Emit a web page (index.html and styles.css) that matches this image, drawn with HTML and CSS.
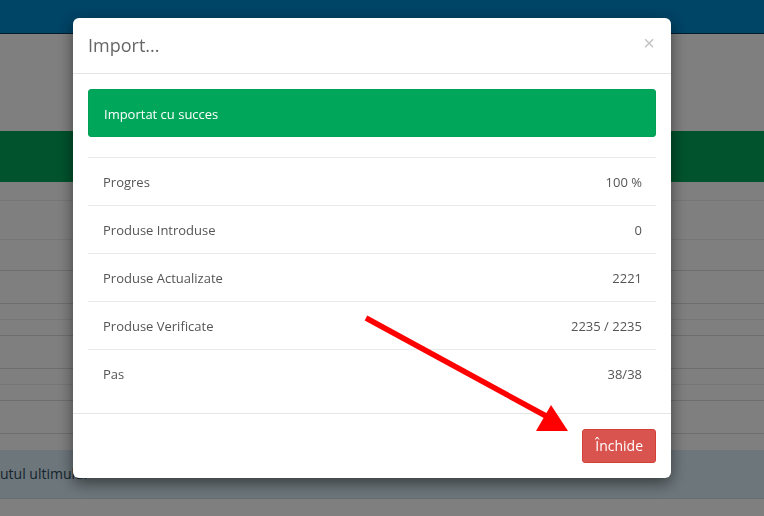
FILE: index.html
```html
<!DOCTYPE html>
<html lang="ro">
<head>
    <meta charset="UTF-8">
    <meta name="viewport" content="width=device-width, initial-scale=1.0">
    <title>Import</title>
    <link rel="stylesheet" href="styles.css">
</head>
<body>
    <div class="page">
        <div class="topbar"></div>
        <div class="hero"></div>
        <div class="band"></div>
        <div class="rows">
            <div class="line h18 light"></div>
            <div class="line h38 light"></div>
            <div class="line h30"></div>
            <div class="line h32"></div>
            <div class="line h15 light"></div>
            <div class="line h15"></div>
            <div class="line h32"></div>
            <div class="line h15 light"></div>
            <div class="line h15"></div>
            <div class="line h32"></div>
            <div class="line h15 none"></div>
        </div>
        <div class="info">utul ultimului</div>
    </div>

    <div class="backdrop">
        <div class="modal">
            <div class="modal-header">
                <h4 class="modal-title">Import...</h4>
                <span class="close">&times;</span>
            </div>
            <div class="modal-body">
                <div class="alert">Importat cu succes</div>
                <table class="stats">
                    <tr><td>Progres</td><td class="val">100 %</td></tr>
                    <tr><td>Produse Introduse</td><td class="val">0</td></tr>
                    <tr><td>Produse Actualizate</td><td class="val">2221</td></tr>
                    <tr><td>Produse Verificate</td><td class="val">2235 / 2235</td></tr>
                    <tr><td>Pas</td><td class="val">38/38</td></tr>
                </table>
            </div>
            <div class="modal-footer">
                <button class="btn">Închide</button>
            </div>
        </div>
    </div>

    <!-- red annotation arrow -->
    <svg class="arrow" width="764" height="516" viewBox="0 0 764 516">
        <line x1="366" y1="318" x2="546" y2="416" stroke="#ff0000" stroke-width="5.5"/>
        <polygon points="551,405 536,431 568,431" fill="#ff0000"/>
    </svg>
</body>
</html>
```

FILE: styles.css
```css
*{
    box-sizing: border-box;
}

body{
    margin: 0;
    width: 764px;
    height: 516px;
    overflow: hidden;
    font-family: "Open Sans", "Noto Sans", sans-serif;
    font-size: 13px;
    color: #555;
    background-color: #fff;
}

.topbar{
    height: 34px;
    background-color: #0088cc;
    border-bottom: 1px solid #003a5a;
}

.hero{
    height: 97px;
    background-color: #fff;
}

.band{
    height: 51px;
    background-color: #00a65a;
}

.line{
    border-bottom: 1px solid #dcdcdc;
}
.line.light{
    border-bottom-color: #ececec;
}
.line.none{
    border-bottom: none;
}
.h15{ height: 16px; }
.h18{ height: 19px; }
.h30{ height: 31px; }
.h32{ height: 33px; }
.h38{ height: 39px; }

.info{
    height: 49px;
    background-color: #d9edf7;
    border-bottom: 1px solid #c8dfe9;
    color: #2d4a5c;
    font-size: 14px;
    line-height: 48px;
    white-space: nowrap;
}

.backdrop{
    position: fixed;
    inset: 0;
    background-color: rgba(0, 0, 0, 0.5);
    padding: 18px 0 0 73px;
}

.modal{
    width: 598px;
    background-color: #fff;
    border-radius: 6px;
    box-shadow: 0 5px 15px rgba(0, 0, 0, 0.5);
}

.modal-header{
    display: flex;
    justify-content: space-between;
    align-items: center;
    padding: 15px;
    border-bottom: 1px solid #e5e5e5;
}

.modal-title{
    margin: 0;
    font-size: 18px;
    font-weight: 400;
    line-height: 25px;
    color: #666;
}

.close{
    font-family: "Liberation Sans", sans-serif;
    font-size: 20px;
    font-weight: 400;
    line-height: 1;
    color: #c4c4c4;
    margin-right: 1px;
    margin-top: -6px;
}

.modal-body{
    padding: 15px;
}

.alert{
    height: 48px;
    padding: 0 15px;
    line-height: 48px;
    border-radius: 3px;
    background-color: #00a65a;
    border: 1px solid #00a057;
    color: #fff;
    margin-bottom: 20px;
}

.stats{
    width: 100%;
    border-collapse: collapse;
}

.stats td{
    height: 48px;
    padding: 0 14px 0 15px;
    border-top: 1px solid #eaeaea;
    vertical-align: middle;
}

.stats .val{
    text-align: right;
}

.modal-footer{
    display: flex;
    justify-content: flex-end;
    padding: 15px;
    border-top: 1px solid #e5e5e5;
}

.btn{
    font-family: "Open Sans", "Noto Sans", sans-serif;
    font-size: 14px;
    height: 34px;
    padding: 0 12px;
    border: 1px solid #d43f3a;
    border-radius: 3px;
    background-color: #d9534f;
    color: #fff;
}

.arrow{
    position: fixed;
    left: 0;
    top: 0;
    pointer-events: none;
}
```
